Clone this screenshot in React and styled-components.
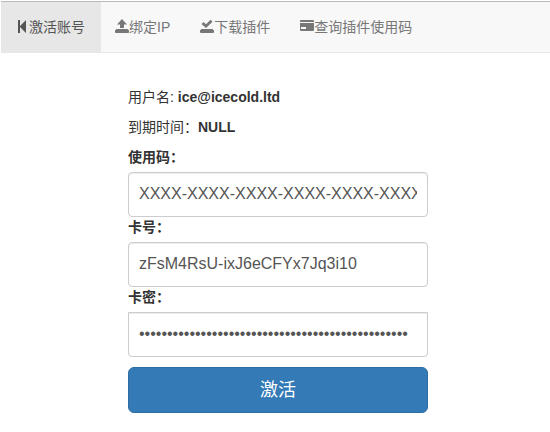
import React from "react";
import styled, { createGlobalStyle } from "styled-components";

const GlobalStyle = createGlobalStyle`
  *, *::before, *::after { box-sizing: border-box; }
  body {
    margin: 0;
    background: #fff;
    color: #333;
    font: 14px/20px "Liberation Sans", Arial, "Noto Sans CJK SC", sans-serif;
  }
`;

const Page = styled.div`
  padding: 1px 0 0 1px;
`;

const NavBar = styled.nav`
  background: #f8f8f8;
  border-top: 1px solid #bbb;
  border-bottom: 1px solid #e7e7e7;
`;

const NavList = styled.ul`
  display: flex;
  margin: 0;
  padding: 0;
  list-style: none;
`;

const NavLink = styled.a`
  display: flex;
  align-items: center;
  height: 50px;
  padding: 0 16px 0 14px;
  white-space: nowrap;
  text-decoration: none;
  color: ${(p) => (p.$active ? "#555" : "#777")};
  background: ${(p) => (p.$active ? "#e7e7e7" : "transparent")};
`;

const Glyph = styled.svg`
  width: 14px;
  height: 14px;
  margin-bottom: 2px;
  flex: none;
  fill: currentColor;
`;

const Form = styled.form`
  max-width: 330px;
  margin: 0 auto;
  padding: 34px 15px 15px;
`;

const Main = styled.main`
  padding-left: 5px;
`;

const Info = styled.p`
  margin: 0 0 10px;
`;

const Label = styled.label`
  display: block;
  margin-bottom: 5px;
  font-weight: 700;
`;

const Input = styled.input`
  display: block;
  width: 100%;
  height: 45px;
  padding: 9px 10px 11px;
  border: 1px solid #ccc;
  border-radius: ${(p) => (p.$squareTop ? "0 0 4px 4px" : "4px")};
  background: #fff;
  box-shadow: inset 0 1px 1px rgba(0, 0, 0, 0.075);
  color: #555;
  font: inherit;
  font-size: 16px;
`;

const Submit = styled.button`
  display: block;
  width: 100%;
  margin-top: 10px;
  padding: 10px 16px;
  border: 1px solid #2e6da4;
  border-radius: 6px;
  background: #337ab7;
  color: #fff;
  font: inherit;
  font-size: 18px;
  line-height: 24px;
  cursor: pointer;
`;

const links = [
  { text: "激活账号", active: true, icon: <path d="M3 1h2v6L11 1v13L5 8v6H3z" /> },
  { text: "绑定IP", icon: <path d="M7 0l5 5.5H9V9H5V5.5H2zM1.5 10h11l1.5 1.5V13q0 1-1 1H1q-1 0-1-1v-1.500z" /> },
  { text: "下载插件", icon: <path d="M1.500 5l2-2L6 5.200 10.500.700l2 2L6 9zM1.500 10h11l1.500 1.500V13q0 1-1 1H1q-1 0-1-1v-1.500z" /> },
  {
    text: "查询插件使用码",
    icon: <path fillRule="evenodd" d="M1 1h12q1 0 1 1v1H0V2q0-1 1-1zM0 4h14v7q0 1-1 1H1q-1 0-1-1zM1 8v2h5V8z" />,
  },
];

const fields = [
  { id: "code", label: "使用码：", type: "text", value: "XXXX-XXXX-XXXX-XXXX-XXXX-XXXX" },
  { id: "card", label: "卡号：", type: "text", value: "zFsM4RsU-ixJ6eCFYx7Jq3i10" },
  { id: "secret", label: "卡密：", type: "password", value: "x".repeat(48), squareTop: true },
];

export default function App() {
  return (
    <Page lang="zh-CN">
      <GlobalStyle />
      <NavBar>
        <NavList>
          {links.map((l) => (
            <li key={l.text}>
              <NavLink href="#" $active={l.active} aria-current={l.active ? "page" : undefined}>
                <Glyph viewBox="0 0 14 14" aria-hidden="true">{l.icon}</Glyph>
                {l.text}
              </NavLink>
            </li>
          ))}
        </NavList>
      </NavBar>
      <Main>
        <Form onSubmit={(e) => e.preventDefault()}>
          <Info>用户名: <strong>ice@icecold.ltd</strong></Info>
          <Info>到期时间：<strong>NULL</strong></Info>
          {fields.map((f) => (
            <React.Fragment key={f.id}>
              <Label htmlFor={f.id}>{f.label}</Label>
              <Input id={f.id} type={f.type} defaultValue={f.value} $squareTop={f.squareTop} />
            </React.Fragment>
          ))}
          <Submit type="submit">激活</Submit>
        </Form>
      </Main>
    </Page>
  );
}
